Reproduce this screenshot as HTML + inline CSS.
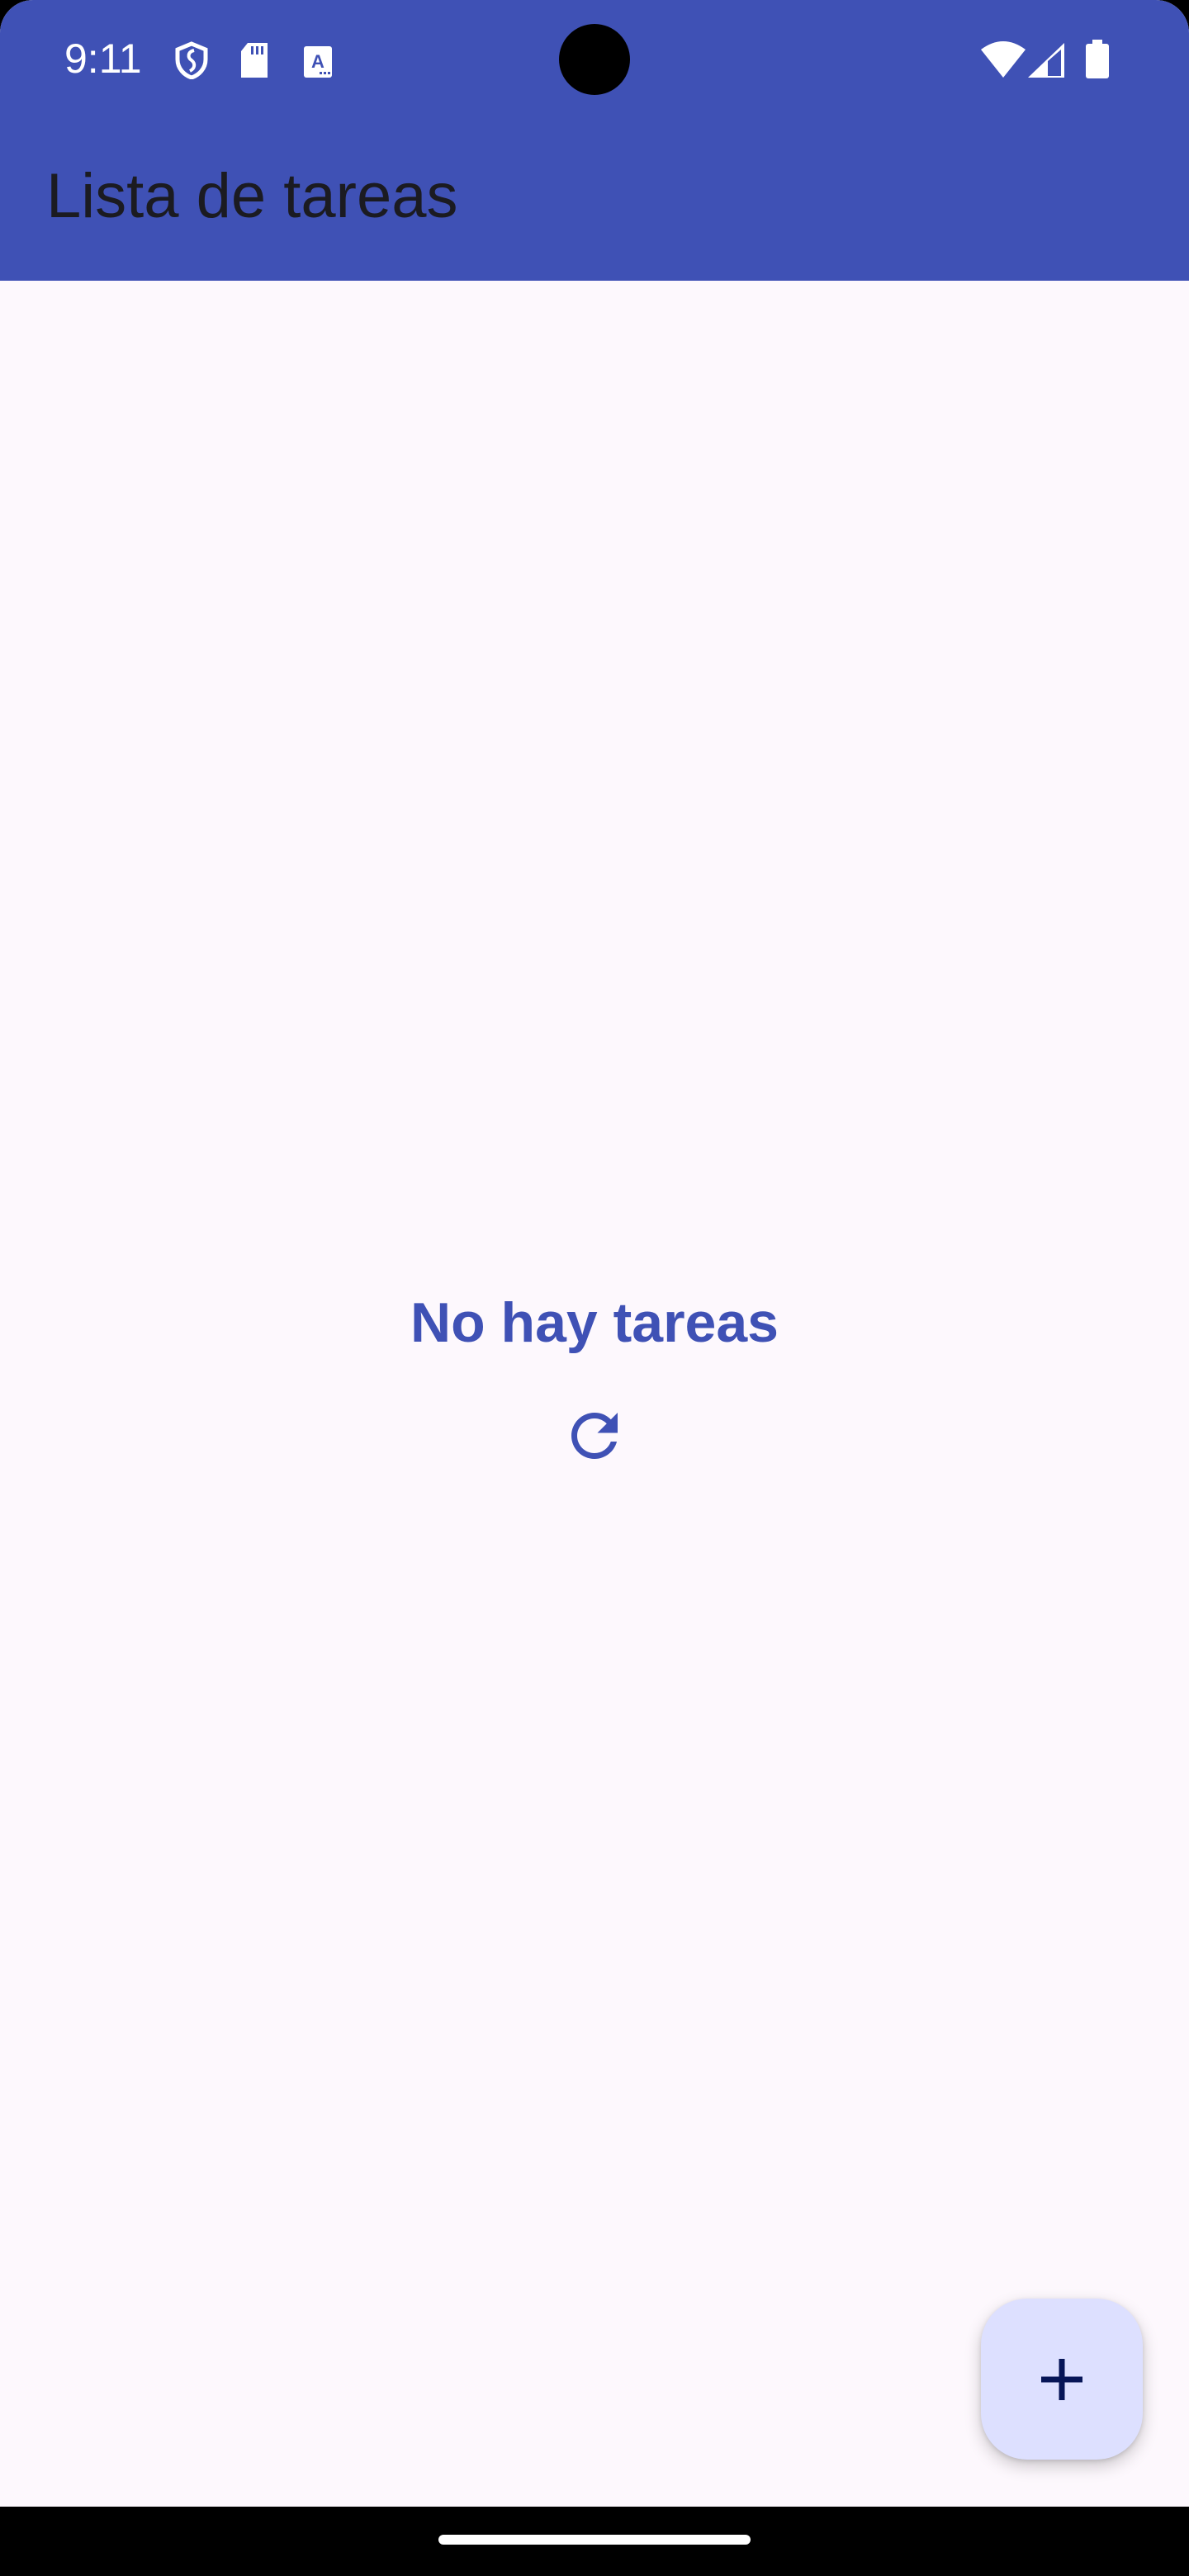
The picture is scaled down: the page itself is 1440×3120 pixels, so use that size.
<!DOCTYPE html>
<html><head><meta charset="utf-8"><style>
html,body{margin:0;padding:0}
body{width:1440px;height:3120px;background:#000;position:relative;overflow:hidden;font-family:"Liberation Sans",sans-serif}
.screen{position:absolute;left:0;top:0;width:1440px;height:3036px;background:#FDF8FD;border-radius:40px 40px 0 0;overflow:hidden}
.bar{position:absolute;left:0;top:0;width:1440px;height:340px;background:#3F51B5}
.time{position:absolute;left:78px;top:42px;font-size:50px;color:#fff;letter-spacing:0}
.title{position:absolute;left:56px;top:194px;font-size:76px;color:#1B1B21;letter-spacing:0}
.cam{position:absolute;left:677px;top:29px;width:86px;height:86px;border-radius:50%;background:#000}
.empty{position:absolute;left:0;width:1440px;text-align:center;top:1563px;font-size:68px;font-weight:bold;color:#3F51B5}
.fab{position:absolute;left:1188px;top:2784px;width:196px;height:195px;border-radius:56px;background:#DDE0FF;box-shadow:0 8px 20px rgba(0,0,0,.2),0 2px 6px rgba(0,0,0,.12)}
.handle{position:absolute;left:531px;top:3070px;width:378px;height:12px;border-radius:6px;background:#fff}
</style></head><body>
<div class="screen">
 <div class="bar">
  <div class="time">9:11</div>
  <svg style="position:absolute;left:211px;top:50px" width="42" height="46" viewBox="0 0 42 46"><path d="M21 3 L38 10 V22 C38 33 30 41 21 44 C12 41 4 33 4 22 V10 Z" fill="none" stroke="#fff" stroke-width="5"/><path d="M24 11 C16 13 16 20 21 23 C26 27 25 33 19 36" fill="none" stroke="#fff" stroke-width="4"/></svg>
  <svg style="position:absolute;left:290px;top:52px" width="36" height="42" viewBox="0 0 36 42"><path d="M10 0 H34 V42 H2 V10 Z" fill="#fff"/><rect x="14" y="4" width="3" height="10" fill="#3F51B5"/><rect x="20" y="4" width="3" height="10" fill="#3F51B5"/><rect x="26" y="4" width="3" height="10" fill="#3F51B5"/></svg>
  <svg style="position:absolute;left:368px;top:56px" width="34" height="38" viewBox="0 0 34 38"><rect x="0" y="0" width="34" height="38" rx="3" fill="#fff"/><text x="17" y="26" font-size="22" font-weight="bold" text-anchor="middle" fill="#3F51B5" font-family="Liberation Sans">A</text><rect x="19" y="31" width="3" height="3" fill="#3F51B5"/><rect x="24" y="31" width="3" height="3" fill="#3F51B5"/><rect x="29" y="31" width="3" height="3" fill="#3F51B5"/></svg>
  <div class="cam"></div>
  <svg style="position:absolute;left:1188px;top:50px" width="54" height="45" viewBox="0 0 54 45"><path d="M0 10 Q27 -10 54 10 L27 44 Z" fill="#fff"/></svg>
  <svg style="position:absolute;left:1245px;top:52px" width="46" height="42" viewBox="0 0 46 42"><path d="M0 42 L44 0 V42 Z" fill="#fff"/><path d="M24 40 V22 L40 8 V40 Z" fill="#3F51B5"/></svg>
  <svg style="position:absolute;left:1315px;top:48px" width="28" height="47" viewBox="0 0 28 47"><rect x="8" y="0" width="12" height="6" fill="#fff"/><rect x="0" y="5" width="28" height="42" rx="3" fill="#fff"/></svg>
  <div class="title">Lista de tareas</div>
 </div>
 <div class="empty">No hay tareas</div>
 <svg style="position:absolute;left:678px;top:1697px" width="84" height="84" viewBox="0 0 24 24"><path fill="#3F51B5" d="M17.65 6.35A7.958 7.958 0 0 0 12 4c-4.42 0-7.990 3.58-7.99 8s3.57 8 7.99 8c3.73 0 6.84-2.55 7.73-6h-2.08A5.990 5.990 0 0 1 12 18c-3.31 0-6-2.690-6-6s2.69-6 6-6c1.66 0 3.14.69 4.22 1.78L13 11h7V4l-2.35 2.35z"/></svg>
 <div class="fab"><svg style="position:absolute;left:73px;top:73px" width="50" height="50" viewBox="0 0 50 50"><rect x="21.5" y="0" width="7" height="50" fill="#061557"/><rect x="0" y="21.5" width="50" height="7" fill="#061557"/></svg></div>
</div>
<div class="handle"></div>
</body></html>
